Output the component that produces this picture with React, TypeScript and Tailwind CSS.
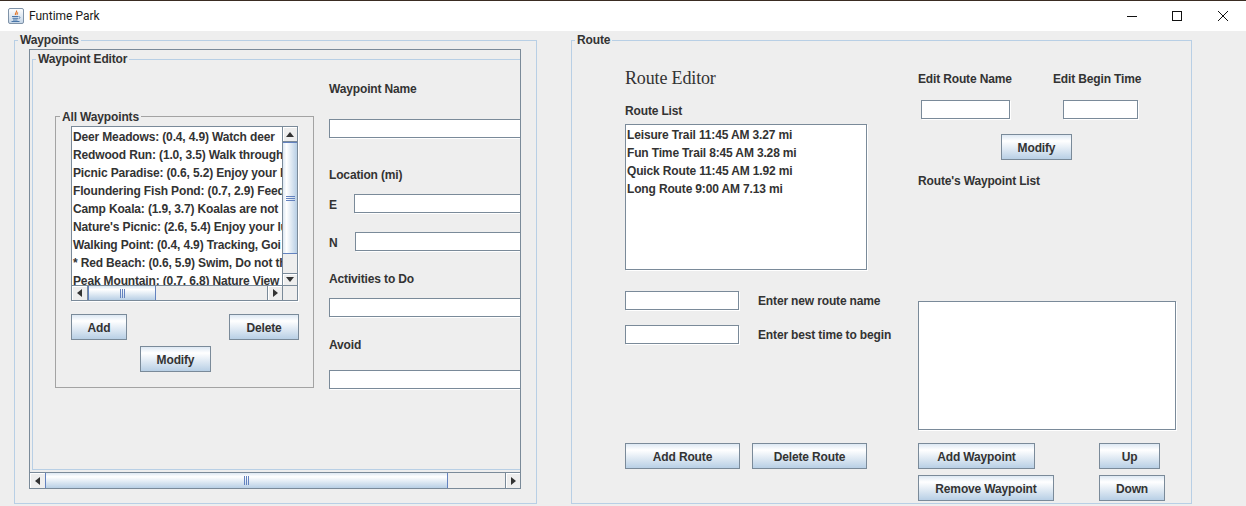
import type { ReactNode } from 'react'

// only what shows in the clipped list viewport
const waypoints = [
  'Deer Meadows: (0.4, 4.9) Watch deer',
  'Redwood Run: (1.0, 3.5) Walk through',
  'Picnic Paradise: (0.6, 5.2) Enjoy your l',
  'Floundering Fish Pond: (0.7, 2.9) Feed',
  'Camp Koala: (1.9, 3.7) Koalas are not',
  "Nature's Picnic: (2.6, 5.4) Enjoy your lu",
  'Walking Point: (0.4, 4.9) Tracking, Goi',
  '* Red Beach: (0.6, 5.9) Swim, Do not th',
  'Peak Mountain: (0.7, 6.8) Nature View',
]

const routes = [
  'Leisure Trail 11:45 AM 3.27 mi',
  'Fun Time Trail 8:45 AM 3.28 mi',
  'Quick Route 11:45 AM 1.92 mi',
  'Long Route 9:00 AM 7.13 mi',
]

const thumbH = 'bg-[linear-gradient(to_bottom,#dde8f3_0%,#ffffff_25%,#b8cfe5_100%)]'
const thumbV = 'bg-[linear-gradient(to_right,#dde8f3_0%,#ffffff_25%,#b8cfe5_100%)]'

function Titled({ title, className, legend = '-top-[9px] left-[3px]', children }: { title: string; className: string; legend?: string; children?: ReactNode }) {
  return (
    <div className={`relative border ${className}`}>
      <span className={`absolute whitespace-nowrap bg-[#eeeeee] px-[2px] leading-[16px] ${legend}`}>{title}</span>
      {children}
    </div>
  )
}

function Btn({ className, children }: { className: string; children: ReactNode }) {
  return (
    <div className={`flex h-[26px] shrink-0 items-center justify-center whitespace-nowrap border border-[#7a8a99] pt-[1px] ${thumbH} ${className}`}>
      {children}
    </div>
  )
}

function Field({ className }: { className: string }) {
  return <div className={`h-[19px] shrink-0 border border-[#7a8a99] bg-white shadow-[1px_1px_0_#ffffff] ${className}`} />
}

function Label({ className = '', children }: { className?: string; children: ReactNode }) {
  return <div className={`h-[16px] shrink-0 whitespace-nowrap leading-[16px] ${className}`}>{children}</div>
}

function Arrow({ dir }: { dir: 'up' | 'down' | 'left' | 'right' }) {
  const pts = {
    up: '4,0 8,5 0,5',
    down: '0,0 8,0 4,5',
    left: '5,0 5,8 0,4',
    right: '0,0 5,4 0,8',
  }[dir]
  const vertical = dir === 'up' || dir === 'down'
  return (
    <svg width={vertical ? 8 : 5} height={vertical ? 5 : 8} viewBox={vertical ? '0 0 8 5' : '0 0 5 8'}>
      <polygon points={pts} fill="#333333" />
    </svg>
  )
}

function ArrowBtn({ dir, className }: { dir: 'up' | 'down' | 'left' | 'right'; className: string }) {
  return (
    <div className={`flex shrink-0 items-center justify-center border-[#7a8a99] bg-[#eeeeee] shadow-[inset_1px_1px_0_#ffffff] ${className}`}>
      <Arrow dir={dir} />
    </div>
  )
}

function GripV() {
  return (
    <div className="flex flex-col gap-[1px]">
      <div className="h-[1px] w-[9px] bg-[#6382bf]" />
      <div className="h-[1px] w-[9px] bg-[#6382bf]" />
      <div className="h-[1px] w-[9px] bg-[#6382bf]" />
    </div>
  )
}

function GripH() {
  return (
    <div className="flex gap-[1px]">
      <div className="h-[9px] w-[1px] bg-[#6382bf]" />
      <div className="h-[9px] w-[1px] bg-[#6382bf]" />
      <div className="h-[9px] w-[1px] bg-[#6382bf]" />
    </div>
  )
}

function JavaIcon() {
  return (
    <svg width="16" height="16" viewBox="0 0 16 16">
      <defs>
        <linearGradient id="jv" x1="0" y1="0" x2="0" y2="1">
          <stop offset="0" stopColor="#ffffff" />
          <stop offset="1" stopColor="#c3d4e6" />
        </linearGradient>
      </defs>
      <rect x="0.5" y="0.5" width="15" height="15" rx="1.5" fill="url(#jv)" stroke="#7f93a8" />
      <path d="M8.5 2.5c1 1.5-2 2.5-1 4.500M10 4.500c-1 .8-1.500 1.500-.7 2.500" fill="none" stroke="#e2762a" strokeWidth="1.200" />
      <path d="M4 8.500h6.500M4.500 10.300h5.500M5 12h4.500M3.500 13.500h8" stroke="#4a76a8" strokeWidth="1" fill="none" />
      <path d="M11 8.800c1.500-.3 1.500 1.700-.5 1.900" stroke="#4a76a8" strokeWidth="0.800" fill="none" />
    </svg>
  )
}

export default function App() {
  return (
    <div className="flex h-[506px] w-[1246px] flex-col overflow-hidden bg-[#eeeeee] font-['Liberation_Sans',Arial,sans-serif] text-[12px] font-bold tracking-[-0.15px] text-[#333333]">
      <div className="h-[1px] shrink-0 bg-[#3a2c22]" />
      <div className="flex h-[30px] shrink-0 items-center bg-white pl-[8px] font-['Roboto',sans-serif] font-normal tracking-normal text-[#1a1a1a]">
        <JavaIcon />
        <span className="ml-[5px] text-[12px]">Funtime Park</span>
        <div className="ml-auto flex items-center">
          <svg width="10" height="10" viewBox="0 0 10 10" className="mr-[35px]"><path d="M0 5.500h10" stroke="#111" /></svg>
          <svg width="10" height="10" viewBox="0 0 10 10" className="mr-[36px]"><rect x="0.500" y="0.500" width="9" height="9" fill="none" stroke="#111" /></svg>
          <svg width="10" height="10" viewBox="0 0 10 10" className="mr-[18px]"><path d="M0 0l10 10M10 0L0 10" stroke="#111" /></svg>
        </div>
      </div>

      <div className="flex flex-1 pl-[14px] pt-[9px]">
        {/* Waypoints */}
        <Titled title="Waypoints" className="h-[464px] w-[523px] shrink-0 border-[#b8cfe5]">
          <div className="ml-[14px] mt-[8px] flex h-[440px] w-[492px] flex-col border border-b-0 border-[#7a8a99]">
            <div className="flex-1 overflow-hidden pl-[2px] pt-[9px]">
              <Titled title="Waypoint Editor" className="flex h-[411px] w-[520px] border-[#b8cfe5]">
                <div className="shrink-0 pl-[22px] pt-[56px]">
                  <Titled title="All Waypoints" legend="-top-[8px] left-[4px]" className="h-[272px] w-[259px] border-[#a3a3a3]">
                    <div className="ml-[15px] mt-[9px] grid h-[175px] w-[227px] grid-cols-[210px_15px] grid-rows-[158px_15px] border border-[#7a8a99] shadow-[1px_1px_0_#ffffff]">
                      <div className="overflow-hidden bg-white pl-[1px] pt-[1px]">
                        {waypoints.map((w) => (
                          <div key={w} className="h-[18px] whitespace-nowrap leading-[18px]">{w}</div>
                        ))}
                      </div>
                      <div className="flex flex-col border-l border-[#7a8a99]">
                        <ArrowBtn dir="up" className="h-[15px] border-b" />
                        <div className={`flex h-[112px] items-center justify-center border-y border-[#6382bf] ${thumbV}`}><GripV /></div>
                        <div className="flex-1" />
                        <ArrowBtn dir="down" className="h-[12px] border-t" />
                      </div>
                      <div className="flex border-t border-[#7a8a99]">
                        <ArrowBtn dir="left" className="w-[16px] border-r" />
                        <div className={`flex w-[68px] items-center justify-center border-x border-[#6382bf] ${thumbH}`}><GripH /></div>
                        <div className="flex-1" />
                        <ArrowBtn dir="right" className="w-[15px] border-l" />
                      </div>
                      <div className="border-l border-t border-[#7a8a99]" />
                    </div>
                    <div className="ml-[15px] mt-[13px] flex w-[228px] justify-between">
                      <Btn className="w-[56px]">Add</Btn>
                      <Btn className="w-[70px]">Delete</Btn>
                    </div>
                    <Btn className="ml-[84px] mt-[6px] w-[71px]">Modify</Btn>
                  </Titled>
                </div>

                <div className="ml-[15px] flex flex-col pt-[21px]">
                  <Label>Waypoint Name</Label>
                  <Field className="mt-[22px] w-[200px]" />
                  <Label className="mt-[29px]">Location (mi)</Label>
                  <div className="mt-[11px] flex h-[19px] items-center">
                    <span className="w-[25px] pt-[2px] leading-[16px]">E</span>
                    <Field className="w-[200px]" />
                  </div>
                  <div className="mt-[19px] flex h-[19px] items-center">
                    <span className="w-[26px] pt-[2px] leading-[16px]">N</span>
                    <Field className="w-[200px]" />
                  </div>
                  <Label className="mt-[20px]">Activities to Do</Label>
                  <Field className="mt-[11px] w-[200px]" />
                  <Label className="mt-[20px]">Avoid</Label>
                  <Field className="mt-[17px] w-[200px]" />
                </div>
              </Titled>
            </div>
            <div className="flex h-[17px] shrink-0 border-y border-[#7a8a99] bg-[#eeeeee]">
              <ArrowBtn dir="left" className="w-[15px]" />
              <div className={`flex w-[403px] items-center justify-center border-x border-[#6382bf] ${thumbH}`}><GripH /></div>
              <div className="flex-1" />
              <ArrowBtn dir="right" className="w-[15px] border-l" />
            </div>
          </div>
        </Titled>

        {/* Route */}
        <Titled title="Route" className="ml-[34px] flex h-[464px] w-[621px] shrink-0 border-[#b8cfe5]">
          <div className="ml-[53px] flex w-[242px] shrink-0 flex-col pt-[26px]">
            <div className="h-[22px] font-['Liberation_Serif',serif] text-[18px] font-normal leading-[22px]">Route Editor</div>
            <Label className="mt-[14px]">Route List</Label>
            <div className="mt-[5px] h-[146px] w-[242px] border border-[#7a8a99] bg-white pt-[1px] shadow-[1px_1px_0_#ffffff]">
              {routes.map((r) => (
                <div key={r} className="h-[18px] pl-[1px] leading-[18px]">{r}</div>
              ))}
            </div>
            <div className="mt-[21px] flex items-center gap-[19px]">
              <Field className="w-[114px]" />
              <span className="whitespace-nowrap">Enter new route name</span>
            </div>
            <div className="mt-[15px] flex items-center gap-[19px]">
              <Field className="w-[114px]" />
              <span className="whitespace-nowrap">Enter best time to begin</span>
            </div>
            <div className="mt-[99px] flex gap-[12px]">
              <Btn className="w-[115px]">Add Route</Btn>
              <Btn className="w-[115px]">Delete Route</Btn>
            </div>
          </div>

          <div className="ml-[51px] flex flex-col pt-[30px]">
            <div className="flex">
              <Label className="w-[135px]">Edit Route Name</Label>
              <Label>Edit Begin Time</Label>
            </div>
            <div className="ml-[3px] mt-[13px] flex gap-[53px]">
              <Field className="w-[89px]" />
              <Field className="w-[75px]" />
            </div>
            <Btn className="ml-[83px] mt-[15px] w-[71px]">Modify</Btn>
            <Label className="mt-[13px]">Route's Waypoint List</Label>
            <div className="mt-[112px] h-[129px] w-[258px] border border-[#7a8a99] bg-white shadow-[1px_1px_0_#ffffff]" />
            <div className="mt-[13px] flex">
              <Btn className="w-[117px]">Add Waypoint</Btn>
              <Btn className="ml-[64px] w-[61px]">Up</Btn>
            </div>
            <div className="mt-[6px] flex">
              <Btn className="w-[136px]">Remove Waypoint</Btn>
              <Btn className="ml-[45px] w-[66px]">Down</Btn>
            </div>
          </div>
        </Titled>
      </div>
    </div>
  )
}
